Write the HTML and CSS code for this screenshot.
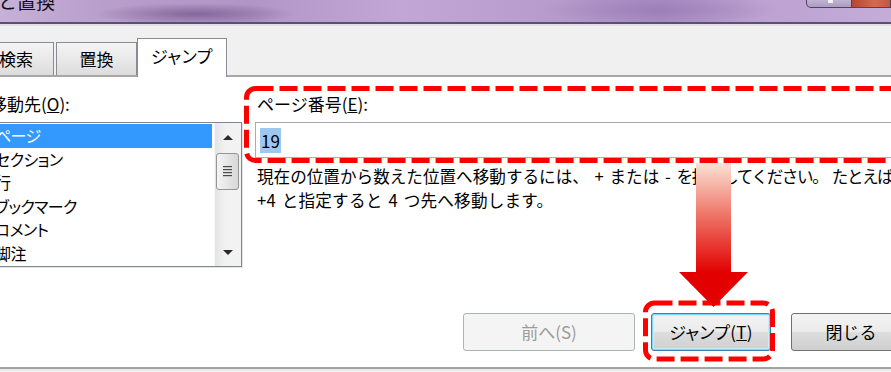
FILE: index.html
```html
<!DOCTYPE html>
<html lang="ja">
<head>
<meta charset="utf-8">
<title>検索と置換</title>
<link rel="stylesheet" href="styles.css">
</head>
<body>
<div class="window">
  <div class="titlebar">
    <span class="title">と置換</span>
    <div class="winbtns">
      <span class="wbtn max"><span class="max-mark"></span></span>
      <span class="wbtn close"></span>
    </div>
  </div>
  <div class="tabstrip">
    <div class="tab tab-find">検索</div>
    <div class="tab tab-replace">置換</div>
    <div class="tab tab-jump active">ジャンプ</div>
  </div>
  <div class="panel">
    <div class="col-left">
      <div class="label">移動先(<u>O</u>):</div>
      <div class="listbox">
        <ul class="items">
          <li class="selected">ページ</li>
          <li>セクション</li>
          <li>行</li>
          <li>ブックマーク</li>
          <li>コメント</li>
          <li>脚注</li>
        </ul>
        <div class="scrollbar">
          <span class="sb-btn"><span class="tri up"></span></span>
          <span class="thumb"><span class="grip"></span></span>
          <span class="track"></span>
          <span class="sb-btn"><span class="tri down"></span></span>
        </div>
      </div>
    </div>
    <div class="col-right">
      <div class="label">ページ番号(<u>E</u>):</div>
      <div class="textbox"><span class="sel">19</span></div>
      <p class="desc">現在の位置から数えた位置へ移動するには、 + または - <span class="tight">を指定してください。 たとえば</span><br><span class="line2">+4 と指定すると 4 つ先へ移動します。</span></p>
    </div>
    <div class="buttons">
      <button class="btn btn-prev" disabled>前へ(S)</button>
      <button class="btn btn-jump">ジャンプ(<u>T</u>)</button>
      <button class="btn btn-close">閉じる</button>
    </div>
  </div>
  <div class="bottom"></div>
</div>
<svg class="annot" width="891" height="372" viewBox="0 0 891 372">
  <defs>
    <linearGradient id="shaft" x1="0" y1="0" x2="0" y2="1">
      <stop offset="0" stop-color="#fbe2d6"/>
      <stop offset="0.45" stop-color="#ef7a6c"/>
      <stop offset="1" stop-color="#e20000"/>
    </linearGradient>
  </defs>
  <rect x="246.5" y="88.5" width="700" height="72" rx="9" fill="none" stroke="#ff0000" stroke-width="5" stroke-dasharray="18 6"/>
  <rect x="645.5" y="303" width="127" height="56" rx="9" fill="none" stroke="#ff0000" stroke-width="5" stroke-dasharray="18 6"/>
  <rect x="696" y="163" width="35" height="110" fill="url(#shaft)"/>
  <polygon points="679,272 748,272 713.5,307" fill="#e30000"/>
</svg>
</body>
</html>
```

FILE: styles.css
```css
* { box-sizing: border-box; }

html, body {
  margin: 0;
  padding: 0;
}

body {
  position: relative;
  width: 891px;
  height: 372px;
  overflow: hidden;
  background: #f0f0f0;
  font-family: "Noto Sans CJK JP", "Noto Sans", sans-serif;
  font-size: 16px;
  color: #000;
}

.window {
  width: 891px;
  height: 372px;
  overflow: hidden;
}

/* title bar */
.titlebar {
  height: 24px;
  display: flex;
  align-items: flex-start;
  border-bottom: 2px solid #5d4f6e;
  background:
    radial-gradient(ellipse 100px 11px at 195px 14px, rgba(100, 70, 125, 0.6), rgba(100, 70, 125, 0) 100%),
    radial-gradient(ellipse 120px 14px at 660px 10px, rgba(130, 100, 160, 0.35), rgba(130, 100, 160, 0) 100%),
    linear-gradient(90deg, #c7b0d9 0%, #b89ecb 12%, #b195c6 28%, #c2a7d6 45%, #b69bcc 62%, #a98dc2 74%, #bda2d2 86%, #c4acd8 100%);
}

.title {
  margin-top: -9px;
  margin-left: -2px;
  font-size: 19px;
  line-height: 20px;
  color: #111;
}

.winbtns {
  margin-left: auto;
  display: flex;
  margin-top: -3px;
}

.wbtn {
  display: block;
  height: 11px;
  border: 1px solid #4e4460;
  border-top: none;
}

.wbtn.max {
  width: 46px;
  margin-right: -1px;
  border-radius: 0 0 0 5px;
  background: linear-gradient(#c9bdd9, #ab9cc2);
  display: flex;
  justify-content: center;
}

.max-mark {
  display: block;
  width: 5px;
  height: 6px;
  margin-left: 2px;
  border: 1px solid #eeeeee;
  border-top: none;
  background: #f4f4f4;
}

.wbtn.close {
  width: 40px;
  background: linear-gradient(90deg, #b8442f, #d66a4e 60%, #c4563e);
}

/* tab strip */
.tabstrip {
  height: 53px;
  border-top: 2px solid #e2dfe8;
  border-bottom: 2px solid #a7a7a7;
  display: flex;
  align-items: flex-end;
  margin-left: -22px;
}

.tab {
  height: 33px;
  display: flex;
  align-items: center;
  justify-content: center;
  border: 1px solid #898c95;
  border-bottom: none;
  background: linear-gradient(#f4f4f4, #e9e9e9 50%, #dcdcdc);
  font-size: 17px;
  line-height: 20px;
}

.tab-find { width: 76px; }
.tab-replace { width: 81px; margin-left: 2px; }
.tab-jump { width: 90px; }

.tab.active {
  height: 39px;
  margin-bottom: -2px;
  background: #ffffff;
  padding-bottom: 4px;
  font-feature-settings: "palt";
  letter-spacing: 0.5px;
}

/* panel */
.panel {
  height: 290px;
  background: #ffffff;
  margin-left: -12px;
  padding-top: 15px;
  display: grid;
  grid-template-columns: 254px 1fr;
  grid-template-rows: auto 1fr;
  column-gap: 13px;
}

.label {
  height: 24px;
  line-height: 24px;
  padding-left: 3px;
  font-size: 17px;
}

.col-left .label {
  margin-left: -1px;
}

.col-right .label {
  padding-left: 2px;
}

/* list box */
.listbox {
  margin-top: 6px;
  height: 145px;
  border: 1px solid #828790;
  display: flex;
  box-shadow: 1px 1px 0 #e4e4e4;
}

.items {
  list-style: none;
  margin: 0 2px 0 0;
  padding: 1px 0 0 0;
  flex: 1;
}

.items li {
  height: 23.6px;
  line-height: 23.6px;
  padding-left: 6px;
  font-feature-settings: "palt";
  letter-spacing: -0.6px;
  white-space: nowrap;
}

.items li.selected {
  background: #3399ff;
  color: #ffffff;
}

.scrollbar {
  width: 27px;
  display: flex;
  flex-direction: column;
  background: linear-gradient(90deg, #e4e4e4, #f2f2f2 40%, #f3f3f3);
  border-left: 1px solid #f6f6f6;
}

.sb-btn {
  height: 30px;
  display: flex;
  align-items: center;
  justify-content: center;
}

.tri {
  display: block;
  width: 0;
  height: 0;
  border-left: 5px solid transparent;
  border-right: 5px solid transparent;
}

.tri.up { border-bottom: 5px solid #2a2a2a; margin-bottom: 2px; }
.tri.down { border-top: 5px solid #2a2a2a; margin-top: 2px; }

.thumb {
  height: 37px;
  margin: 0 2px 0 1px;
  border: 1px solid #959595;
  border-radius: 3px;
  background: linear-gradient(90deg, #f4f4f4, #e6e6e6 50%, #d7d7d7);
  display: flex;
  align-items: center;
  justify-content: center;
}

.grip {
  display: block;
  width: 9px;
  height: 11px;
  background: repeating-linear-gradient(#4a4a4a 0 1px, #c8c8c8 1px 2px, transparent 2px 3px);
}

.track {
  flex: 1;
}

/* right column */
.textbox {
  margin-top: 6px;
  width: 700px;
  height: 36px;
  border: 1px solid #abadb3;
  border-top-color: #a6a8ae;
  padding-left: 4px;
  display: flex;
  align-items: center;
}

.sel {
  background: #9dc9f1;
  height: 25px;
  line-height: 25px;
  padding: 0 1px;
  font-size: 17px;
}

.desc {
  margin: 6px 0 0 0;
  padding-left: 2px;
  line-height: 24px;
  font-size: 16.6px;
  word-spacing: 2px;
  white-space: nowrap;
}

.desc .tight {
  letter-spacing: -1.4px;
}

.desc .line2 {
  letter-spacing: 0.2px;
}

/* buttons */
.buttons {
  grid-column: 1 / -1;
  align-self: end;
  margin-bottom: 16px;
  padding-left: 475px;
  display: flex;
}

.btn {
  height: 38px;
  flex-shrink: 0;
  font-family: inherit;
  font-size: 17px;
  line-height: 20px;
  padding: 0;
  border: 1px solid #707070;
  border-radius: 3px;
  color: #000;
  background: linear-gradient(#f3f3f3, #ebebeb 48%, #dddddd 52%, #cfcfcf);
}

.btn-prev {
  width: 172px;
  border-color: #adb2b5;
  background: #f4f4f4;
  color: #9c9c9c;
}

.btn-jump {
  width: 120px;
  margin-left: 16px;
  border-color: #3c7fb1;
  box-shadow: inset 0 0 0 1px #7fd6f5, inset 0 0 0 2px #c7ecfb;
  font-feature-settings: "palt";
  letter-spacing: 0.3px;
}

.btn-close {
  width: 120px;
  margin-left: 20px;
}

.bottom {
  height: 3px;
  border-top: 2px solid #a3a3a3;
  background: #e6e6e6;
}

/* annotation overlay */
.annot {
  position: absolute;
  left: 0;
  top: 0;
  pointer-events: none;
}
```
